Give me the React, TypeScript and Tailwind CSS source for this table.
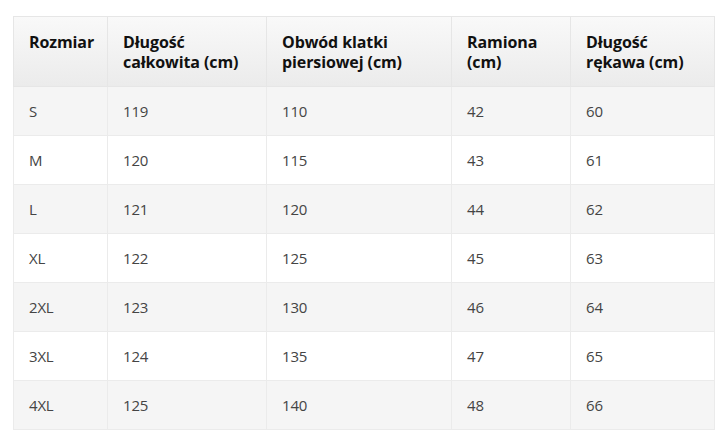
import React from 'react';

const headers = [
  ['Rozmiar'],
  ['Długość', 'całkowita (cm)'],
  ['Obwód klatki', 'piersiowej (cm)'],
  ['Ramiona', '(cm)'],
  ['Długość', 'rękawa (cm)'],
];

const rows = [
  ['S', '119', '110', '42', '60'],
  ['M', '120', '115', '43', '61'],
  ['L', '121', '120', '44', '62'],
  ['XL', '122', '125', '45', '63'],
  ['2XL', '123', '130', '46', '64'],
  ['3XL', '124', '135', '47', '65'],
  ['4XL', '125', '140', '48', '66'],
];

const widths = ['w-[94px]', 'w-[159px]', 'w-[185px]', 'w-[119px]', 'w-[144px]'];

const App: React.FC = () => {
  return (
    <div className="w-[720px] h-[435px] bg-white pt-4 pl-[13px] font-['Open_Sans',sans-serif]">
      <table className="w-[701px] table-fixed border-collapse">
        <colgroup>
          {widths.map((w, i) => (
            <col key={i} className={w} />
          ))}
        </colgroup>
        <thead>
          <tr className="bg-gradient-to-b from-[#f9f9f9] to-[#ebebeb]">
            {headers.map((h, i) => (
              <th
                key={i}
                className="h-[70px] border border-[#e6e6e6] px-[15px] pt-[15px] align-top text-left text-[16px] leading-5 font-bold text-[#111] tracking-[-0.1px]"
              >
                {h.map((line, j) => (
                  <div key={j}>{line}</div>
                ))}
              </th>
            ))}
          </tr>
        </thead>
        <tbody>
          {rows.map((r, i) => (
            <tr key={i} className={i % 2 === 0 ? 'bg-[#f5f5f5]' : 'bg-white'}>
              {r.map((c, j) => (
                <td
                  key={j}
                  className="h-[49px] border border-[#ebebeb] px-[15px] align-middle text-[15px] text-[#444] tracking-[-0.2px]"
                >
                  {c}
                </td>
              ))}
            </tr>
          ))}
        </tbody>
      </table>
    </div>
  );
};

export default App;
